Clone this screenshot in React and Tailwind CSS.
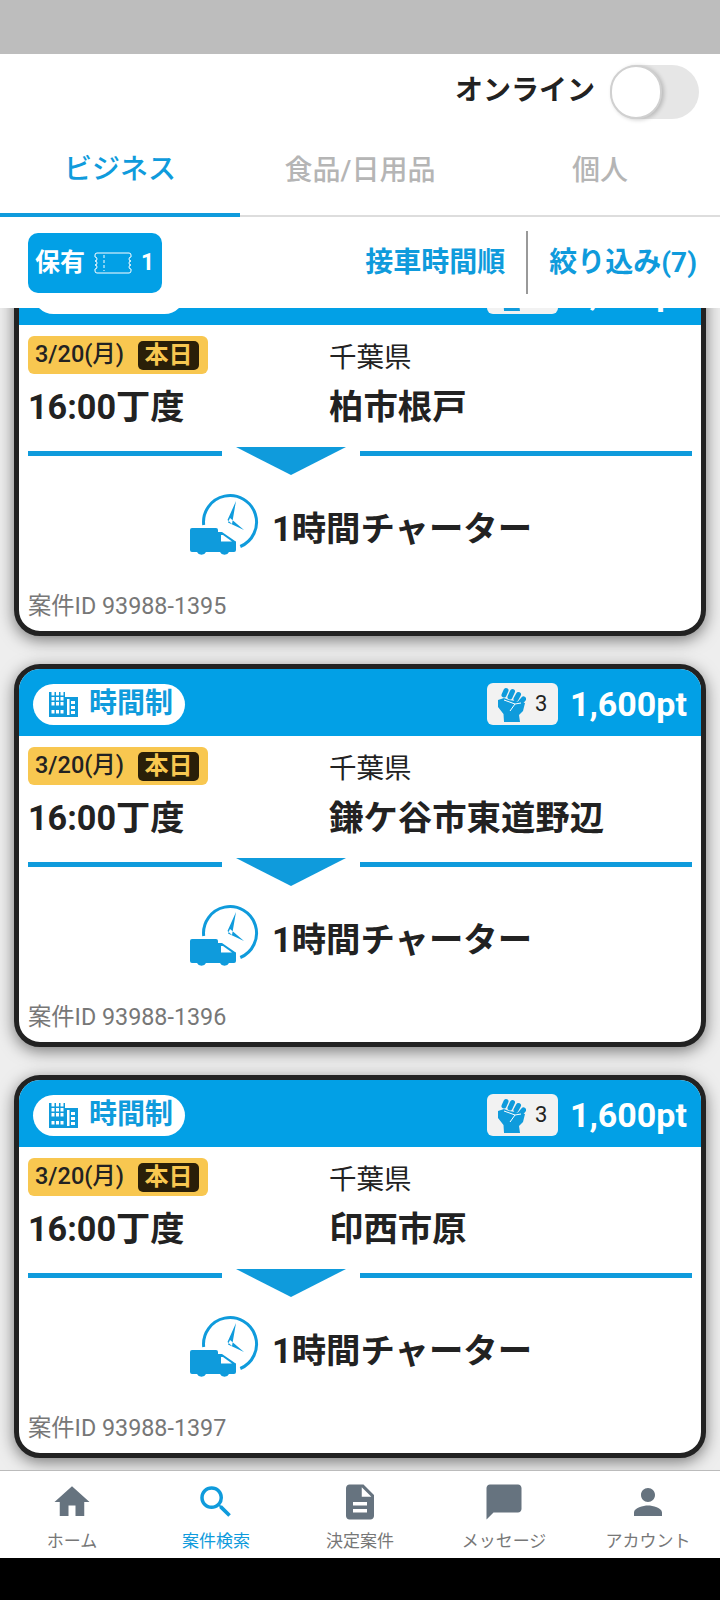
import { MdHome, MdSearch, MdDescription, MdChatBubble, MdPerson } from 'react-icons/md'

const FONT = "font-['Roboto','Noto_Sans_CJK_JP',sans-serif]"

const jobs = [
    { id: '93988-1395', pref: '千葉県', city: '柏市根戸' },
    { id: '93988-1396', pref: '千葉県', city: '鎌ケ谷市東道野辺' },
    { id: '93988-1397', pref: '千葉県', city: '印西市原' },
]

const navItems = [
    { label: 'ホーム', Icon: MdHome },
    { label: '案件検索', Icon: MdSearch, active: true },
    { label: '決定案件', Icon: MdDescription },
    { label: 'メッセージ', Icon: MdChatBubble },
    { label: 'アカウント', Icon: MdPerson },
]

function BuildingIcon() {
    const left = [0, 1, 2, 3].flatMap(r => [0, 1, 2].map(c => [2.5 + c * 4.5, r === 3 ? 18 : r * 5]))
    const right = [0, 1, 2].map(r => [22, 9 + r * 5])
    return (
        <svg width="29" height="25" viewBox="0 0 29 25">
            <path d="M0 0h16v5h13v20H0z" fill="#0f9bdc" />
            {left.map(([x, y], i) => (
                <rect key={i} x={x} y={y} width="3" height="3.5" fill="white" />
            ))}
            {right.map(([x, y], i) => (
                <rect key={i} x={x} y={y} width="4" height="3" fill="white" />
            ))}
            <rect x="18" y="7" width="2.5" height="16" fill="white" />
        </svg>
    )
}

function TicketIcon() {
    return (
        <svg width="40" height="22" viewBox="0 0 40 22" fill="none" stroke="white" strokeWidth="1">
            <path d="M4 1h32a2 2 0 0 1 2 2v2a2 2 0 0 0 0 4 2 2 0 0 0 0 4 2 2 0 0 0 0 4v2a2 2 0 0 1-2 2H4a2 2 0 0 1-2-2v-2a2 2 0 0 0 0-4 2 2 0 0 0 0-4 2 2 0 0 0 0-4V3a2 2 0 0 1 2-2z" />
            <path d="M11 3v16" strokeDasharray="3 2" />
        </svg>
    )
}

function FistIcon() {
    return (
        <svg width="29" height="35" viewBox="0 0 29 35">
            <g stroke="#0f9bdc" strokeWidth="5" strokeLinecap="round">
                <path d="M9 3.5L7 8" />
                <path d="M15.5 4.5L13 10" />
                <path d="M21.5 7.5L19 12" />
                <path d="M26.5 12L23.5 15.5" />
            </g>
            <path d="M1 13l6-2 5 2 6 1 5 1 5 1-2 8-4 4 1 7H7l-.5-8L1 20z" fill="#0f9bdc" />
            <path d="M7 13l11 4-5 7M18 17l6-1" fill="none" stroke="white" strokeWidth="1" />
        </svg>
    )
}

function CharterIcon() {
    return (
        <svg width="70" height="64" viewBox="0 0 70 64" fill="none">
            <path d="M13.7 32A26.5 26.5 0 1 1 50.3 53.5" stroke="#0f9bdc" strokeWidth="3" />
            <path d="M46 8L37.5 27 42 31zM54 37L38 29.5 40 25z" fill="#0f9bdc" />
            <path d="M2 35h24a2 2 0 0 1 2 2v2h4l13 9a1 1 0 0 1 1 1v8a2 2 0 0 1-2 2h-5a5 5 0 0 1-9 0H16a5 5 0 0 1-9 0H2a2 2 0 0 1-2-2V37a2 2 0 0 1 2-2z" fill="#0f9bdc" />
            <path d="M31 42h2l9 6.5H31z" fill="white" />
        </svg>
    )
}

function JobCard({ job }) {
    return (
        <div className="rounded-[26px] border-[5px] border-[#222] bg-white overflow-hidden h-[383px] shadow-[0_4px_16px_rgba(0,0,0,0.5)] flex flex-col">
            <div className="h-[67px] bg-[#02a0e6] flex items-center justify-between pl-[14px] pr-[14px] pt-[3px] shrink-0">
                <div className="w-[152px] h-[41px] bg-white rounded-full flex items-center gap-[11px] pl-[16px]">
                    <BuildingIcon />
                    <span className="text-[28px] font-bold text-[#0f9bdc] leading-none">時間制</span>
                </div>
                <div className="flex items-center gap-[12px]">
                    <div className="w-[71px] h-[42px] bg-[#f2f2f2] rounded-[6px] flex items-center gap-[9px] pl-[10px]">
                        <FistIcon />
                        <span className="text-[22px] text-[#222] leading-none">3</span>
                    </div>
                    <span className="text-[34px] font-bold text-white leading-none">1,600pt</span>
                </div>
            </div>
            <div className="pl-[9px] pr-[10px] pt-[11px] flex">
                <div className="w-[301px]">
                    <div className="w-[180px] h-[38px] bg-[#f8c750] rounded-[6px] flex items-center justify-between pl-[7px] pr-[9px]">
                        <span className="text-[23.5px] font-medium text-[#222] leading-none">3/20(月)</span>
                        <span className="bg-[#2a1f08] text-[#f8c750] text-[24px] font-bold leading-none rounded-[5px] w-[61px] h-[29px] flex items-center justify-center">本日</span>
                    </div>
                    <p className="text-[34.2px] font-bold text-[#222] leading-none mt-[16px]">16:00丁度</p>
                </div>
                <div>
                    <p className="text-[27.5px] text-[#222] leading-none mt-[8px]">{job.pref}</p>
                    <p className="text-[34.4px] font-bold text-[#222] leading-none mt-[18px]">{job.city}</p>
                </div>
            </div>
            <div className="flex items-start pl-[9px] pr-[9px] mt-[23px] h-[28px]">
                <div className="w-[194px] h-[5px] mt-[4px] bg-[#0f9bdc]" />
                <svg className="mx-[14px] shrink-0" width="110" height="28" viewBox="0 0 110 28">
                    <path d="M0 0h110L55 28z" fill="#0f9bdc" />
                </svg>
                <div className="flex-1 h-[5px] mt-[4px] bg-[#0f9bdc]" />
            </div>
            <div className="flex items-center justify-center gap-[12px] mt-[18px] pl-[2px]">
                <CharterIcon />
                <span className="text-[34.4px] font-bold text-[#222] leading-none mt-[8px]">1時間チャーター</span>
            </div>
            <p className="text-[23.3px] text-[#777] leading-none ml-[9px] mt-[38px]">案件ID {job.id}</p>
        </div>
    )
}

export default function App() {
    return (
        <div className={`w-[720px] h-[1600px] flex flex-col overflow-hidden bg-[#eeeeee] ${FONT}`}>
            <div className="h-[54px] bg-[#bdbdbd] shrink-0" />

            <div className="bg-white shrink-0 relative z-10">
                <div className="h-[74px] flex items-center justify-end pr-[21px] gap-[15px]">
                    <span className="text-[28px] font-bold text-[#222] leading-none">オンライン</span>
                    <div className="w-[89px] h-[54px] mt-[2px] rounded-full bg-[#e6e6e6] relative">
                        <div className="absolute left-0 top-0 w-[52px] h-[54px] rounded-full bg-white border-2 border-[#d0d0d0] shadow-[2px_1px_4px_rgba(0,0,0,0.2)]" />
                    </div>
                </div>
                <div className="flex h-[89px] border-b-2 border-[#ddd]">
                    <div className="flex-1 flex items-center justify-center pb-[2px] border-b-[4px] border-[#0f9bdc] -mb-[2px] text-[28px] font-medium text-[#0f9bdc]">ビジネス</div>
                    <div className="flex-1 flex items-center justify-center pb-[2px] text-[28px] font-medium text-[#b5b5b5]">食品/日用品</div>
                    <div className="flex-1 flex items-center justify-center pb-[2px] text-[28px] font-medium text-[#b5b5b5]">個人</div>
                </div>
                <div className="h-[91px] flex items-center pl-[28px] pr-[23px]">
                    <div className="w-[134px] h-[60px] bg-[#02a0e6] rounded-[10px] flex items-center gap-[8px] pl-[7px] text-white font-bold">
                        <span className="text-[25px] leading-none">保有</span>
                        <TicketIcon />
                        <span className="text-[23px] leading-none">1</span>
                    </div>
                    <div className="ml-auto flex items-center">
                        <span className="text-[28px] font-bold text-[#0f9bdc] leading-none">接車時間順</span>
                        <div className="w-[2px] h-[63px] bg-[#999] mx-[21px]" />
                        <span className="text-[28px] font-bold text-[#0f9bdc] leading-none">絞り込み(7)</span>
                    </div>
                </div>
            </div>

            <div className="flex-1 overflow-hidden px-[14px]">
                <div className="-mt-[55px] flex flex-col gap-[28px]">
                    {jobs.map(job => <JobCard key={job.id} job={job} />)}
                </div>
            </div>

            <div className="h-[88px] bg-white border-t border-[#bbb] shrink-0 flex relative z-10">
                {navItems.map(({ label, Icon, active }) => (
                    <div key={label} className="flex-1 flex flex-col items-center pt-[10px]">
                        <Icon size={42} color={active ? '#0f9bdc' : '#66737f'} />
                        <span className={`text-[17px] leading-none mt-[10px] ${active ? 'text-[#0f9bdc]' : 'text-[#777]'}`}>{label}</span>
                    </div>
                ))}
            </div>
            <div className="h-[42px] bg-black shrink-0" />
        </div>
    )
}
